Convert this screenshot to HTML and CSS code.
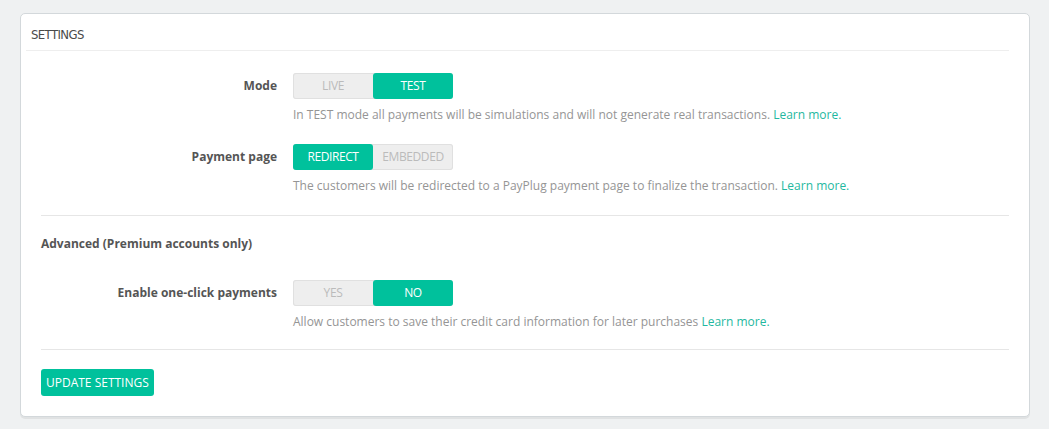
FILE: index.html
```html
<!DOCTYPE html>
<html lang="en">
<head>
    <meta charset="UTF-8">
    <title>Settings</title>
    <link rel="stylesheet" href="styles.css">
</head>
<body>
    <div class="panel">
        <div class="panel-heading">SETTINGS</div>

        <div class="form-group">
            <label class="control-label">Mode</label>
            <div class="control">
                <div class="switch">
                    <span class="switch-opt">LIVE</span>
                    <span class="switch-opt active">TEST</span>
                </div>
                <p class="help">In TEST mode all payments will be simulations and will not generate real transactions. <a href="#">Learn more.</a></p>
            </div>
        </div>

        <div class="form-group">
            <label class="control-label">Payment page</label>
            <div class="control">
                <div class="switch">
                    <span class="switch-opt active">REDIRECT</span>
                    <span class="switch-opt">EMBEDDED</span>
                </div>
                <p class="help">The customers will be redirected to a PayPlug payment page to finalize the transaction. <a href="#">Learn more.</a></p>
            </div>
        </div>

        <hr>

        <h4 class="section-title">Advanced (Premium accounts only)</h4>

        <div class="form-group last">
            <label class="control-label">Enable one-click payments</label>
            <div class="control">
                <div class="switch">
                    <span class="switch-opt">YES</span>
                    <span class="switch-opt active">NO</span>
                </div>
                <p class="help">Allow customers to save their credit card information for later purchases <a href="#">Learn more.</a></p>
            </div>
        </div>

        <hr>

        <button class="btn-update">UPDATE SETTINGS</button>
    </div>
</body>
</html>
```

FILE: styles.css
```css
body {
    margin: 0;
    padding: 13px 20px 12px 20px;
    background-color: #eff1f2;
    font-family: "Open Sans", "DejaVu Sans", sans-serif;
    color: #555;
}
.panel {
    width: 968px;
    background-color: #fff;
    border: 1px solid #d3d8db;
    border-radius: 5px;
    box-shadow: 0 2px 0 rgba(0, 0, 0, 0.06);
    padding: 0 20px 20px 20px;
}
.panel-heading {
    margin: 0 0 22px -15px;
    padding: 0 0 0 5px;
    height: 36px;
    line-height: 41px;
    border-bottom: 1px solid #eee;
    font-family: "DejaVu Sans Condensed", sans-serif;
    font-stretch: condensed;
    font-size: 13px;
    letter-spacing: -0.6px;
    color: #4a4a4a;
}
.form-group {
    display: grid;
    grid-template-columns: 236px 1fr;
    column-gap: 16px;
    margin-bottom: 20px;
}
.form-group:first-of-type + .form-group {
    margin-top: 1px;
}
.form-group.last {
    margin-bottom: 18px;
}
.control-label {
    text-align: right;
    font-weight: bold;
    font-size: 12px;
    line-height: 26px;
    color: #555;
}
.switch {
    display: flex;
    width: 160px;
    height: 26px;
    border-radius: 3px;
    background-color: #eee;
    box-shadow: inset 0 0 0 1px #e0e0e0;
}
.switch-opt {
    flex: 1;
    text-align: center;
    line-height: 26px;
    font-size: 12px;
    color: #bbb;
    letter-spacing: -0.4px;
}
.switch-opt.active {
    background-color: #00c19c;
    color: #fff;
    border-radius: 3px;
}
.help {
    margin: 7px 0 0 0;
    font-size: 12px;
    line-height: 18px;
    color: #959595;
}
.help a {
    color: #1fb8a0;
    text-decoration: none;
}
hr {
    border: 0;
    border-top: 1px solid #e6e6e6;
    margin: 0;
}
.section-title {
    margin: 19px 0 27px 0;
    font-size: 12px;
    line-height: 18px;
    font-weight: bold;
    color: #555;
}
.btn-update {
    margin-top: 19px;
    background-color: #00c19c;
    color: #fff;
    border: 0;
    border-radius: 3px;
    height: 27px;
    padding: 0 5px;
    font-family: "Open Sans", "DejaVu Sans", sans-serif;
    font-size: 12px;
}
```
